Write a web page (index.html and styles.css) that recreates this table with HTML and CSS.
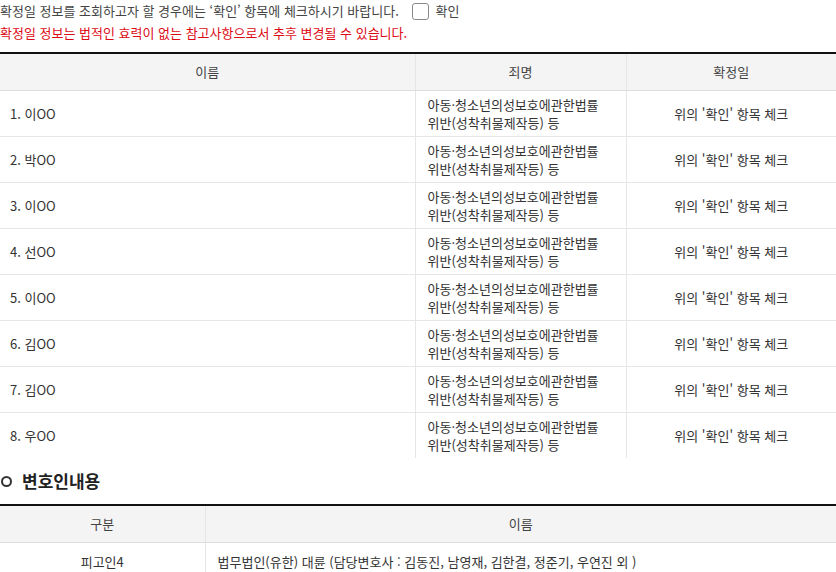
FILE: index.html
```html
<!DOCTYPE html>
<html lang="ko">
<head>
<meta charset="utf-8">
<link rel="stylesheet" href="styles.css">
</head>
<body>
<div class="notice">
  <p class="notice-line">확정일 정보를 조회하고자 할 경우에는 ‘확인’ 항목에 체크하시기 바랍니다. <label class="check"><span class="box"></span>확인</label></p>
  <p class="notice-warn">확정일 정보는 법적인 효력이 없는 참고사항으로서 추후 변경될 수 있습니다.</p>
</div>
<table class="grid">
  <colgroup><col class="c-name"><col class="c-crime"><col class="c-date"></colgroup>
  <thead><tr><th>이름</th><th>죄명</th><th>확정일</th></tr></thead>
  <tbody>
    <tr><td class="left">1. 이OO</td><td class="crime">아동·청소년의성보호에관한법률<br>위반(성착취물제작등) 등</td><td class="center">위의 '확인' 항목 체크</td></tr>
    <tr><td class="left">2. 박OO</td><td class="crime">아동·청소년의성보호에관한법률<br>위반(성착취물제작등) 등</td><td class="center">위의 '확인' 항목 체크</td></tr>
    <tr><td class="left">3. 이OO</td><td class="crime">아동·청소년의성보호에관한법률<br>위반(성착취물제작등) 등</td><td class="center">위의 '확인' 항목 체크</td></tr>
    <tr><td class="left">4. 선OO</td><td class="crime">아동·청소년의성보호에관한법률<br>위반(성착취물제작등) 등</td><td class="center">위의 '확인' 항목 체크</td></tr>
    <tr><td class="left">5. 이OO</td><td class="crime">아동·청소년의성보호에관한법률<br>위반(성착취물제작등) 등</td><td class="center">위의 '확인' 항목 체크</td></tr>
    <tr><td class="left">6. 김OO</td><td class="crime">아동·청소년의성보호에관한법률<br>위반(성착취물제작등) 등</td><td class="center">위의 '확인' 항목 체크</td></tr>
    <tr><td class="left">7. 김OO</td><td class="crime">아동·청소년의성보호에관한법률<br>위반(성착취물제작등) 등</td><td class="center">위의 '확인' 항목 체크</td></tr>
    <tr class="last"><td class="left">8. 우OO</td><td class="crime">아동·청소년의성보호에관한법률<br>위반(성착취물제작등) 등</td><td class="center">위의 '확인' 항목 체크</td></tr>
  </tbody>
</table>
<h2 class="sec-title"><span class="ring"></span>변호인내용</h2>
<table class="grid lawyer">
  <colgroup><col class="c-kind"><col class="c-lname"></colgroup>
  <thead><tr><th>구분</th><th>이름</th></tr></thead>
  <tbody>
    <tr><td class="center">피고인4</td><td class="lname">법무법인(유한) 대륜 (담당변호사 : 김동진, 남영재, 김한결, 정준기, 우연진 외 )</td></tr>
  </tbody>
</table>
</body>
</html>
```
FILE: styles.css
```css
html, body {
  margin: 0;
  padding: 0;
  background: #fff;
}
body {
  font-family: "Noto Sans CJK KR", "Noto Sans", sans-serif;
  font-size: 13px;
  color: #333;
  width: 836px;
}
.notice p {
  margin: 0;
  line-height: 22px;
}
.notice-line {
  color: #444;
}
.check {
  display: inline-flex;
  align-items: center;
  gap: 6px;
  margin-left: 10px;
  vertical-align: top;
  height: 22px;
}
.box {
  display: inline-block;
  width: 15px;
  height: 15px;
  border: 1px solid #8a8a8a;
  border-radius: 3px;
  box-sizing: content-box;
}
.notice-warn {
  color: #dd0a14;
}
.grid {
  width: 836px;
  border-collapse: collapse;
  table-layout: fixed;
  margin-top: 8px;
  border-top: 2px solid #111;
}
.c-name { width: 415px; }
.c-crime { width: 211px; }
.c-date { width: 210px; }
.grid th {
  height: 36px;
  padding: 0;
  background: #f4f4f4;
  font-weight: normal;
  color: #444;
  border-bottom: 1px solid #ddd;
  border-left: 1px solid #e6e6e6;
  line-height: 20px;
}
.grid th:first-child, .grid td:first-child {
  border-left: none;
}
.grid td {
  height: 45px;
  padding: 0;
  border-bottom: 1px solid #e6e6e6;
  border-left: 1px solid #e6e6e6;
  line-height: 18px;
  vertical-align: middle;
}
.grid tr.last td {
  border-bottom: none;
}
.grid td.left {
  padding-left: 10px;
}
.grid td.crime {
  padding-left: 12px;
}
.grid td.center {
  text-align: center;
}
.sec-title {
  display: flex;
  align-items: center;
  gap: 10px;
  margin: 11px 0 0 0;
  font-size: 17px;
  font-weight: bold;
  color: #222;
  line-height: 24px;
}
.ring {
  display: inline-block;
  width: 7px;
  height: 7px;
  border: 2px solid #333;
  border-radius: 50%;
  margin-left: 1px;
}
.lawyer {
  margin-top: 11px;
}
.c-kind { width: 205px; }
.c-lname { width: 631px; }
.lawyer td {
  height: 37px;
}
.grid td.lname {
  padding-left: 12px;
}
```
